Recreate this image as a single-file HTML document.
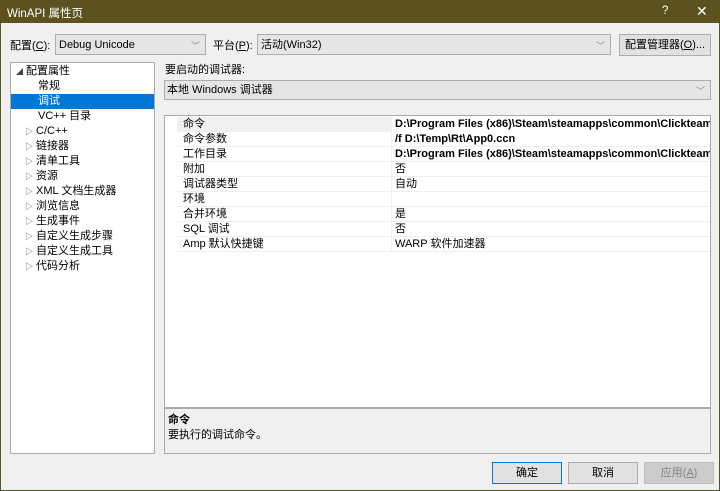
<!DOCTYPE html>
<html><head><meta charset="utf-8"><style>
*{margin:0;padding:0;box-sizing:border-box}
body{width:720px;height:491px;overflow:hidden;background:#f0f0f0;font-family:"Liberation Sans","Noto Sans CJK SC",sans-serif;font-size:11px;color:#000;position:relative}
.a{position:absolute}
.win{left:0;top:0;width:720px;height:491px;border:1px solid #5c5220;border-top:none}
.title{left:0;top:0;width:720px;height:23px;background:#5c5220;color:#fff;font-size:11.5px}
.dd{background:#e5e5e5;border:1px solid #adadad}
.dd .c{position:absolute;right:5px;top:2px;color:#888;font-size:9px}
.btn{background:#e1e1e1;border:1px solid #adadad;text-align:center;line-height:20px;font-size:11px}
.tree{left:10px;top:62px;width:145px;height:392px;background:#fff;border:1px solid #aaa}
.tree div{position:absolute;left:0;width:143px;height:15px;line-height:15px;white-space:nowrap}
.grid{left:164px;top:115px;width:547px;height:293px;background:#fff;border:1px solid #aaa}
.row{position:absolute;left:12px;width:533px;height:15px;line-height:14px;border-bottom:1px solid #f0f0f0}
.row .n{position:absolute;left:6px}
.row .v{position:absolute;left:214px;padding-left:3px;border-left:1px solid #f0f0f0;height:15px;width:319px;white-space:nowrap;overflow:hidden}
b{font-weight:bold}
</style></head><body>
<div class="a title"><span class="a" style="left:7px;top:5px">WinAPI 属性页</span><span class="a" style="left:662px;top:5px">?</span><span class="a" style="left:696px;top:3px;font-size:14px">✕</span></div>
<div class="a win"></div>
<span class="a" style="left:10px;top:37px">配置(<u>C</u>):</span>
<div class="a dd" style="left:55px;top:34px;width:151px;height:21px"><span class="a" style="left:3px;top:3px;line-height:14px">Debug Unicode</span><span class="c" style="top:4px">﹀</span></div>
<span class="a" style="left:213px;top:37px">平台(<u>P</u>):</span>
<div class="a dd" style="left:257px;top:34px;width:354px;height:21px"><span class="a" style="left:3px;top:3px;line-height:14px">活动(Win32)</span><span class="c" style="top:4px">﹀</span></div>
<div class="a btn" style="left:619px;top:34px;width:92px;height:22px">配置管理器(<u>O</u>)...</div>
<div class="a tree">
<div style="top:1px;padding-left:5px"><span style="font-size:7px;color:#444">◢</span> 配置属性</div>
<div style="top:16px;padding-left:27px">常规</div>
<div style="top:31px;padding-left:27px;background:#0078d7;color:#fff">调试</div>
<div style="top:46px;padding-left:27px">VC++ 目录</div>
<div style="top:61px;padding-left:14px"><span style="font-size:8px;color:#555">▷</span> C/C++</div>
<div style="top:76px;padding-left:14px"><span style="font-size:8px;color:#555">▷</span> 链接器</div>
<div style="top:91px;padding-left:14px"><span style="font-size:8px;color:#555">▷</span> 清单工具</div>
<div style="top:106px;padding-left:14px"><span style="font-size:8px;color:#555">▷</span> 资源</div>
<div style="top:121px;padding-left:14px"><span style="font-size:8px;color:#555">▷</span> XML 文档生成器</div>
<div style="top:136px;padding-left:14px"><span style="font-size:8px;color:#555">▷</span> 浏览信息</div>
<div style="top:151px;padding-left:14px"><span style="font-size:8px;color:#555">▷</span> 生成事件</div>
<div style="top:166px;padding-left:14px"><span style="font-size:8px;color:#555">▷</span> 自定义生成步骤</div>
<div style="top:181px;padding-left:14px"><span style="font-size:8px;color:#555">▷</span> 自定义生成工具</div>
<div style="top:196px;padding-left:14px"><span style="font-size:8px;color:#555">▷</span> 代码分析</div>
</div>
<span class="a" style="left:165px;top:61px">要启动的调试器:</span>
<div class="a dd" style="left:164px;top:80px;width:547px;height:20px"><span class="a" style="left:2px;top:2px;line-height:14px">本地 Windows 调试器</span><span class="c" style="top:3px">﹀</span></div>
<div class="a grid">
<div class="row" style="top:1px;background:#f0f0f0"><span class="n">命令</span><span class="v" style="background:#fff"><b>D:\Program Files (x86)\Steam\steamapps\common\Clickteam</b></span></div>
<div class="row" style="top:16px"><span class="n">命令参数</span><span class="v"><b>/f D:\Temp\Rt\App0.ccn</b></span></div>
<div class="row" style="top:31px"><span class="n">工作目录</span><span class="v"><b>D:\Program Files (x86)\Steam\steamapps\common\Clickteam</b></span></div>
<div class="row" style="top:46px"><span class="n">附加</span><span class="v">否</span></div>
<div class="row" style="top:61px"><span class="n">调试器类型</span><span class="v">自动</span></div>
<div class="row" style="top:76px"><span class="n">环境</span><span class="v"></span></div>
<div class="row" style="top:91px"><span class="n">合并环境</span><span class="v">是</span></div>
<div class="row" style="top:106px"><span class="n">SQL 调试</span><span class="v">否</span></div>
<div class="row" style="top:121px"><span class="n">Amp 默认快捷键</span><span class="v">WARP 软件加速器</span></div>
</div>
<div class="a" style="left:164px;top:408px;width:547px;height:46px;border:1px solid #aaa;background:#f0f0f0">
<div class="a" style="left:3px;top:2px;font-weight:bold">命令</div>
<div class="a" style="left:3px;top:17px">要执行的调试命令。</div>
</div>
<div class="a btn" style="left:492px;top:462px;width:70px;height:22px;border-color:#0078d7">确定</div>
<div class="a btn" style="left:568px;top:462px;width:70px;height:22px">取消</div>
<div class="a btn" style="left:644px;top:462px;width:70px;height:22px;background:#ccc;border-color:#bfbfbf;color:#838383">应用(<u>A</u>)</div>
</body></html>
